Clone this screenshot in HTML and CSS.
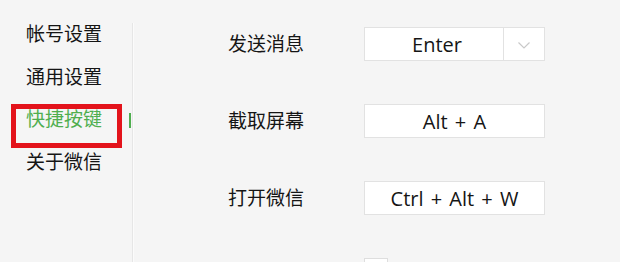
FILE: index.html
```html
<!DOCTYPE html>
<html lang="zh-CN">
<head>
<meta charset="utf-8">
<title>快捷按键</title>
<link rel="stylesheet" href="styles.css">
</head>
<body>
<div class="window">
  <nav class="nav">
    <div class="nav-item">帐号设置</div>
    <div class="nav-item">通用设置</div>
    <div class="nav-item active">快捷按键</div>
    <div class="nav-item">关于微信</div>
  </nav>
  <div class="divider"></div>
  <main class="content">
    <div class="row">
      <div class="label">发送消息</div>
      <div class="keybox select">
        <div class="key-value">Enter</div>
        <div class="key-arrow">
          <svg width="12" height="7" viewBox="0 0 12 7"><polyline points="0.5,0.5 6,6 11.5,0.5" fill="none" stroke="#c9c9c9" stroke-width="1.2"/></svg>
        </div>
      </div>
    </div>
    <div class="row">
      <div class="label">截取屏幕</div>
      <div class="keybox">Alt + A</div>
    </div>
    <div class="row">
      <div class="label">打开微信</div>
      <div class="keybox">Ctrl + Alt + W</div>
    </div>
    <div class="check-row">
      <span class="checkbox"></span>
      <span class="check-label">截图时隐藏当前窗口</span>
    </div>
  </main>
</div>
</body>
</html>
```

FILE: styles.css
```css
html, body {
  margin: 0;
  padding: 0;
  background: #f5f5f5;
}

body {
  font-family: "Noto Sans CJK SC", "Microsoft YaHei", sans-serif;
  color: #151515;
  font-size: 19px;
}

.window {
  display: flex;
  width: 620px;
  height: 262px;
  overflow: hidden;
}

.nav {
  width: 132px;
  flex: none;
  padding-top: 12px;
  box-sizing: border-box;
}

.nav-item {
  height: 42.5px;
  line-height: 42.5px;
  padding-left: 26px;
  white-space: nowrap;
}

.nav-item.active {
  position: relative;
  color: #4fae4f;
}

.nav-item.active::before {
  content: "";
  position: absolute;
  left: 11px;
  top: 7px;
  width: 111px;
  height: 44px;
  border: 5px solid #e3131b;
  box-sizing: border-box;
}

.nav-item.active::after {
  content: "";
  position: absolute;
  left: 129px;
  top: 16px;
  width: 2px;
  height: 15px;
  background: #4fae4f;
}

.divider {
  width: 1px;
  flex: none;
  margin-top: 23px;
  background: #e6e6e6;
  box-shadow: 1px 0 0 #fbfbfb;
}

.content {
  flex: 1;
  padding-left: 95px;
  padding-top: 27px;
}

.row {
  display: flex;
  align-items: center;
  height: 34px;
  margin-bottom: 43px;
}

.label {
  width: 136px;
  flex: none;
  white-space: nowrap;
  padding-bottom: 3px;
}

.keybox {
  width: 181px;
  height: 34px;
  box-sizing: border-box;
  border: 1px solid #e2e2e2;
  background: #fff;
  font-family: "Open Sans", "Noto Sans CJK SC", sans-serif;
  font-size: 20px;
  word-spacing: 2px;
  color: #151515;
  display: flex;
  align-items: center;
  justify-content: center;
  white-space: nowrap;
}

.keybox.select {
  justify-content: flex-start;
}

.key-value {
  flex: 1;
  height: 100%;
  display: flex;
  align-items: center;
  justify-content: center;
  padding-left: 6px;
}

.key-arrow {
  width: 41px;
  height: 100%;
  border-left: 1px solid #e2e2e2;
  display: flex;
  align-items: center;
  justify-content: center;
  box-sizing: border-box;
  padding-top: 2px;
}

.check-row {
  display: flex;
  align-items: flex-start;
  padding-left: 136px;
}

.checkbox {
  width: 24px;
  height: 24px;
  box-sizing: border-box;
  border: 1px solid #dedede;
  background: #fff;
  flex: none;
}

.check-label {
  margin-left: 12px;
  line-height: 24px;
  margin-top: 4px;
  white-space: nowrap;
}
```
